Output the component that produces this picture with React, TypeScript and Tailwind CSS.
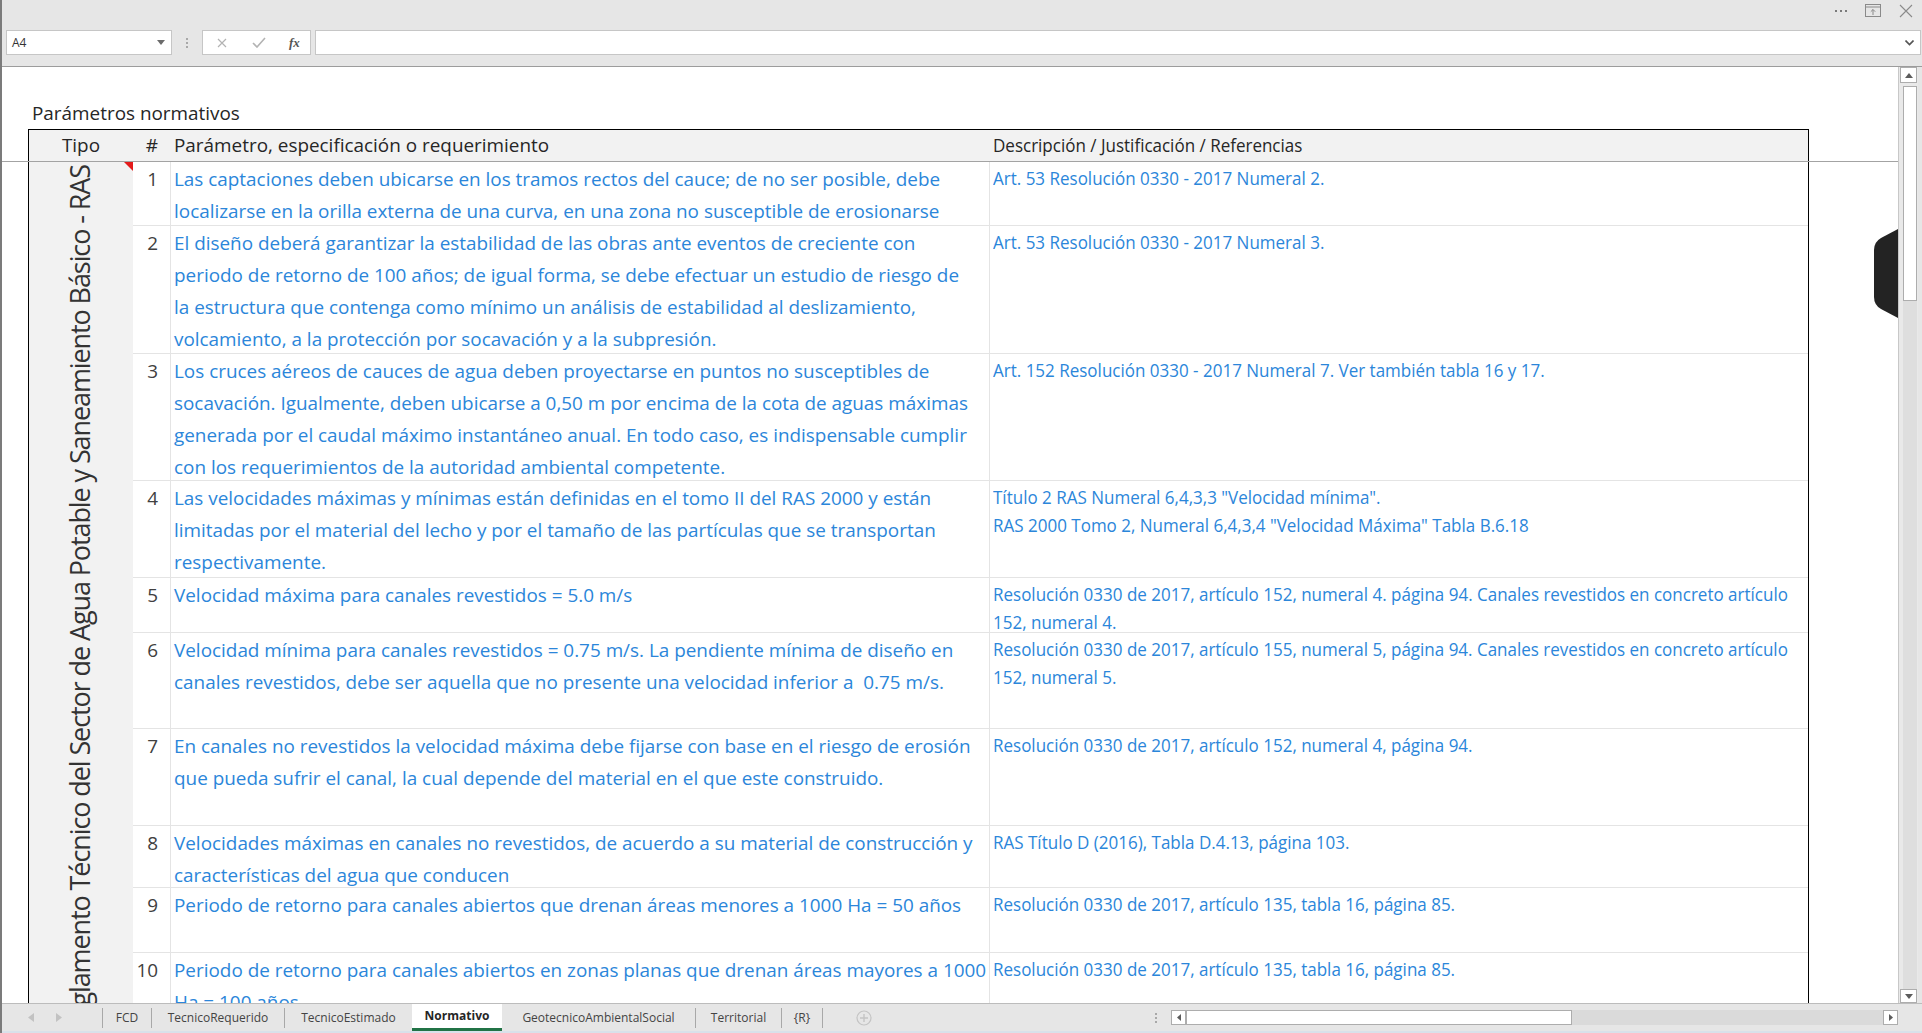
import React from "react";

type Row = { n: number; h: string; p: string[]; d: string[] };

const rows: Row[] = [
  {
    n: 1,
    h: "h-[64px]",
    p: [
      "Las captaciones deben ubicarse en los tramos rectos del cauce; de no ser posible, debe",
      "localizarse en la orilla externa de una curva, en una zona no susceptible de erosionarse",
    ],
    d: ["Art. 53 Resolución 0330 - 2017 Numeral 2."],
  },
  {
    n: 2,
    h: "h-[128px]",
    p: [
      "El diseño deberá garantizar la estabilidad de las obras ante eventos de creciente con",
      "periodo de retorno de 100 años; de igual forma, se debe efectuar un estudio de riesgo de",
      "la estructura que contenga como mínimo un análisis de estabilidad al deslizamiento,",
      "volcamiento, a la protección por socavación y a la subpresión.",
    ],
    d: ["Art. 53 Resolución 0330 - 2017 Numeral 3."],
  },
  {
    n: 3,
    h: "h-[127px]",
    p: [
      "Los cruces aéreos de cauces de agua deben proyectarse en puntos no susceptibles de",
      "socavación. Igualmente, deben ubicarse a 0,50 m por encima de la cota de aguas máximas",
      "generada por el caudal máximo instantáneo anual. En todo caso, es indispensable cumplir",
      "con los requerimientos de la autoridad ambiental competente.",
    ],
    d: ["Art. 152 Resolución 0330 - 2017 Numeral 7. Ver también tabla 16 y 17."],
  },
  {
    n: 4,
    h: "h-[97px]",
    p: [
      "Las velocidades máximas y mínimas están definidas en el tomo II del RAS 2000 y están",
      "limitadas por el material del lecho y por el tamaño de las partículas que se transportan",
      "respectivamente.",
    ],
    d: [
      'Título 2 RAS Numeral 6,4,3,3 "Velocidad mínima".',
      'RAS 2000 Tomo 2, Numeral 6,4,3,4 "Velocidad Máxima" Tabla B.6.18',
    ],
  },
  {
    n: 5,
    h: "h-[55px]",
    p: ["Velocidad máxima para canales revestidos = 5.0 m/s"],
    d: [
      "Resolución 0330 de 2017, artículo 152, numeral 4. página 94. Canales revestidos en concreto artículo",
      "152, numeral 4.",
    ],
  },
  {
    n: 6,
    h: "h-[96px]",
    p: [
      "Velocidad mínima para canales revestidos = 0.75 m/s. La pendiente mínima de diseño en",
      "canales revestidos, debe ser aquella que no presente una velocidad inferior a\u00a0 0.75 m/s.",
    ],
    d: [
      "Resolución 0330 de 2017, artículo 155, numeral 5, página 94. Canales revestidos en concreto artículo",
      "152, numeral 5.",
    ],
  },
  {
    n: 7,
    h: "h-[97px]",
    p: [
      "En canales no revestidos la velocidad máxima debe fijarse con base en el riesgo de erosión",
      "que pueda sufrir el canal, la cual depende del material en el que este construido.",
    ],
    d: ["Resolución 0330 de 2017, artículo 152, numeral 4, página 94."],
  },
  {
    n: 8,
    h: "h-[62px]",
    p: [
      "Velocidades máximas en canales no revestidos, de acuerdo a su material de construcción y",
      "características del agua que conducen",
    ],
    d: ["RAS Título D (2016), Tabla D.4.13, página 103."],
  },
  {
    n: 9,
    h: "h-[65px]",
    p: ["Periodo de retorno para canales abiertos que drenan áreas menores a 1000 Ha = 50 años"],
    d: ["Resolución 0330 de 2017, artículo 135, tabla 16, página 85."],
  },
  {
    n: 10,
    h: "h-[100px]",
    p: [
      "Periodo de retorno para canales abiertos en zonas planas que drenan áreas mayores a 1000",
      "Ha = 100 años",
    ],
    d: ["Resolución 0330 de 2017, artículo 135, tabla 16, página 85."],
  },
];

function Sep() {
  return <div className="h-[20px] w-px shrink-0 bg-[#a8a8a8]" />;
}

export default function App() {
  return (
    <div className="flex h-[1033px] w-[1922px] flex-col overflow-hidden border-l-2 border-[#7b7b7b] bg-[#e6e6e6] font-['Open_Sans',sans-serif] text-[#262626]">
      {/* window controls */}
      <div className="flex h-[30px] shrink-0 items-start justify-end gap-[18px] pr-[9px] pt-[4px]">
        <div className="mt-[6px] flex gap-[3px]">
          <span className="h-[2px] w-[2px] bg-[#7a7a7a]" />
          <span className="h-[2px] w-[2px] bg-[#7a7a7a]" />
          <span className="h-[2px] w-[2px] bg-[#7a7a7a]" />
        </div>
        <svg width="16" height="13" viewBox="0 0 16 13" className="text-[#8a8a8a]">
          <rect x="0.5" y="0.5" width="15" height="12" fill="none" stroke="currentColor" />
          <line x1="0.5" y1="3" x2="15.5" y2="3" stroke="currentColor" />
          <path d="M8 11V5.5M5.8 7.7L8 5.5l2.2 2.2" fill="none" stroke="currentColor" />
        </svg>
        <svg width="14" height="14" viewBox="0 0 14 14" className="text-[#8a8a8a]">
          <path d="M1 1l12 12M13 1L1 13" stroke="currentColor" strokeWidth="1.1" />
        </svg>
      </div>

      {/* formula bar */}
      <div className="flex h-[25px] shrink-0 items-stretch">
        <div className="ml-[4px] flex w-[166px] shrink-0 items-center justify-between border border-[#c6c6c6] bg-white pl-[5px] pr-[6px] text-[12px] text-[#333]">
          <span>A4</span>
          <svg width="8" height="5" viewBox="0 0 8 5">
            <path d="M0 0h8L4 5z" fill="#6b6b6b" />
          </svg>
        </div>
        <div className="flex w-[30px] shrink-0 flex-col items-center justify-center gap-[2px]">
          <span className="h-[2px] w-[2px] bg-[#a8a8a8]" />
          <span className="h-[2px] w-[2px] bg-[#a8a8a8]" />
          <span className="h-[2px] w-[2px] bg-[#a8a8a8]" />
        </div>
        <div className="flex w-[109px] shrink-0 items-center border border-[#c6c6c6] bg-white">
          <svg width="10" height="10" viewBox="0 0 10 10" className="ml-[14px]">
            <path d="M1 1l8 8M9 1L1 9" stroke="#b3b3b3" strokeWidth="1.2" />
          </svg>
          <svg width="14" height="11" viewBox="0 0 14 11" className="ml-[25px]">
            <path d="M1 6l4 4 8-9" fill="none" stroke="#b3b3b3" strokeWidth="1.6" />
          </svg>
          <span className="ml-[23px] font-['Liberation_Serif',serif] text-[13px] font-bold italic text-[#555]">
            fx
          </span>
        </div>
        <div className="ml-[4px] mr-[1px] flex flex-1 items-center justify-end border border-[#c6c6c6] bg-white pr-[6px]">
          <svg width="9" height="6" viewBox="0 0 9 6">
            <path d="M0.5 0.5l4 4 4-4" fill="none" stroke="#555" strokeWidth="1.6" />
          </svg>
        </div>
      </div>

      <div className="h-[11px] shrink-0" />

      {/* sheet + vertical scrollbar */}
      <div className="flex min-h-0 flex-1 border-t border-[#9c9c9c]">
        <div className="relative min-w-0 flex-1 overflow-hidden bg-white">
          <div className="h-[30px]" />
          <div className="h-[32px] pl-[30px] text-[18.9px] leading-[32px]">Parámetros normativos</div>

          {/* header */}
          <div className="flex border-b border-[#a3a3a3]">
            <div className="w-[26px] shrink-0" />
            <div className="flex h-[32px] w-[1781px] shrink-0 border-l border-r border-t border-black bg-[#f2f2f2] text-[18.9px] leading-[31px]">
              <div className="w-[104px] shrink-0 text-center">Tipo</div>
              <div className="w-[38px] shrink-0 pr-[13px] text-right">#</div>
              <div className="w-[819px] shrink-0 pl-[3px]">Parámetro, especificación o requerimiento</div>
              <div className="min-w-0 flex-1 pl-[3px]">
                <div className="origin-left scale-x-[0.9] whitespace-nowrap">Descripción / Justificación / Referencias</div>
              </div>
            </div>
          </div>

          {/* body */}
          <div className="flex">
            <div className="w-[26px] shrink-0" />
            <div className="flex w-[1781px] shrink-0 border-l border-r border-black">
              <div className="relative flex w-[104px] shrink-0 flex-col items-center bg-[#f2f2f2]">
                <svg width="9" height="9" viewBox="0 0 9 9" className="absolute right-0 top-0">
                  <path d="M0 0h9v9z" fill="#e41b1b" />
                </svg>
                <div className="mt-[3px] -translate-x-[2px] rotate-180 whitespace-nowrap text-[27px] leading-[27px] tracking-[-1.1px] text-[#333] [writing-mode:vertical-rl]">
                  Reglamento Técnico del Sector de Agua Potable y Saneamiento Básico - RAS
                </div>
              </div>
              <div className="flex min-w-0 flex-1 flex-col">
                {rows.map((r) => (
                  <div key={r.n} className={`flex shrink-0 border-b border-[#e4e4e4] ${r.h}`}>
                    <div className="w-[38px] shrink-0 border-r border-[#e4e4e4] pr-[12px] pt-[1px] text-right text-[18.9px] leading-[32px] text-[#404040]">
                      {r.n}
                    </div>
                    <div className="w-[819px] shrink-0 border-r border-[#e4e4e4] pl-[3px] pt-[1px] text-[18.9px] leading-[32px] text-[#2b86da]">
                      {r.p.map((l, i) => (
                        <div key={i} className="whitespace-nowrap">
                          {l}
                        </div>
                      ))}
                    </div>
                    <div className="min-w-0 flex-1 pl-[3px] pt-[2px] text-[18.9px] leading-[28px] text-[#2b86da]">
                      <div className="origin-left scale-x-[0.9]">
                        {r.d.map((l, i) => (
                          <div key={i} className="whitespace-nowrap">
                            {l}
                          </div>
                        ))}
                      </div>
                    </div>
                  </div>
                ))}
              </div>
            </div>
          </div>

          {/* floating dark tab on right edge */}
          <svg width="24" height="89" viewBox="0 0 24 89" className="absolute right-0 top-[162px]">
            <path d="M24 0L7 9Q0 13 0 21V68Q0 76 7 80L24 89Z" fill="#232323" />
          </svg>
        </div>

        {/* vertical scrollbar */}
        <div className="flex w-[20px] shrink-0 flex-col border-l border-[#c8c8c8] bg-[#e9e9e9]">
          <div className="mx-[1px] flex h-[16px] items-center justify-center border border-[#adadad] bg-white">
            <svg width="8" height="5" viewBox="0 0 8 5">
              <path d="M0 5h8L4 0z" fill="#5c5c5c" />
            </svg>
          </div>
          <div className="ml-[4px] mr-[1px] mt-[3px] h-[215px] border border-[#adadad] bg-white" />
          <div className="ml-[4px] mr-[1px] flex-1 bg-[#dedede]" />
          <div className="mx-[1px] flex h-[14px] items-center justify-center border border-[#adadad] bg-white">
            <svg width="8" height="5" viewBox="0 0 8 5">
              <path d="M0 0h8L4 5z" fill="#5c5c5c" />
            </svg>
          </div>
        </div>
        <div className="w-[4px] shrink-0" />
      </div>

      {/* sheet tabs */}
      <div className="flex h-[30px] shrink-0 items-center border-b-2 border-t border-b-[#d9e1ea] border-t-[#bcbcbc] pr-[24px] text-[12px] text-[#444]">
        <div className="flex w-[100px] shrink-0 items-center pl-[26px]">
          <svg width="6" height="9" viewBox="0 0 6 9">
            <path d="M6 0v9L0 4.5z" fill="#c2c2c2" />
          </svg>
          <svg width="6" height="9" viewBox="0 0 6 9" className="ml-[22px]">
            <path d="M0 0v9l6-4.5z" fill="#c2c2c2" />
          </svg>
        </div>
        <Sep />
        <div className="w-[48px] shrink-0 text-center">FCD</div>
        <Sep />
        <div className="w-[132px] shrink-0 text-center">TecnicoRequerido</div>
        <Sep />
        <div className="w-[127px] shrink-0 text-center">TecnicoEstimado</div>
        <div className="flex h-full w-[90px] shrink-0 items-center justify-center border-b-[3px] border-[#217346] bg-white font-bold text-[#262626]">
          Normativo
        </div>
        <div className="w-[193px] shrink-0 text-center">GeotecnicoAmbientalSocial</div>
        <Sep />
        <div className="w-[85px] shrink-0 text-center">Territorial</div>
        <Sep />
        <div className="w-[40px] shrink-0 text-center">{"{R}"}</div>
        <Sep />
        <svg width="16" height="16" viewBox="0 0 16 16" className="ml-[33px] shrink-0">
          <circle cx="8" cy="8" r="7" fill="none" stroke="#c4c4c4" strokeWidth="1.2" />
          <path d="M8 4v8M4 8h8" stroke="#c4c4c4" strokeWidth="1.4" />
        </svg>

        <div className="ml-auto flex items-center">
          <div className="mr-[14px] flex flex-col gap-[2px]">
            <span className="h-[2px] w-[2px] bg-[#a8a8a8]" />
            <span className="h-[2px] w-[2px] bg-[#a8a8a8]" />
            <span className="h-[2px] w-[2px] bg-[#a8a8a8]" />
          </div>
          <div className="flex h-[15px] w-[727px] bg-[#dadada]">
            <div className="flex w-[15px] items-center justify-center border border-[#adadad] bg-white">
              <svg width="4" height="7" viewBox="0 0 4 7">
                <path d="M4 0v7L0 3.5z" fill="#5c5c5c" />
              </svg>
            </div>
            <div className="w-[386px] border border-[#adadad] bg-white" />
            <div className="flex-1" />
            <div className="flex w-[15px] items-center justify-center border border-[#adadad] bg-white">
              <svg width="4" height="7" viewBox="0 0 4 7">
                <path d="M0 0v7l4-3.5z" fill="#5c5c5c" />
              </svg>
            </div>
          </div>
        </div>
      </div>
    </div>
  );
}
